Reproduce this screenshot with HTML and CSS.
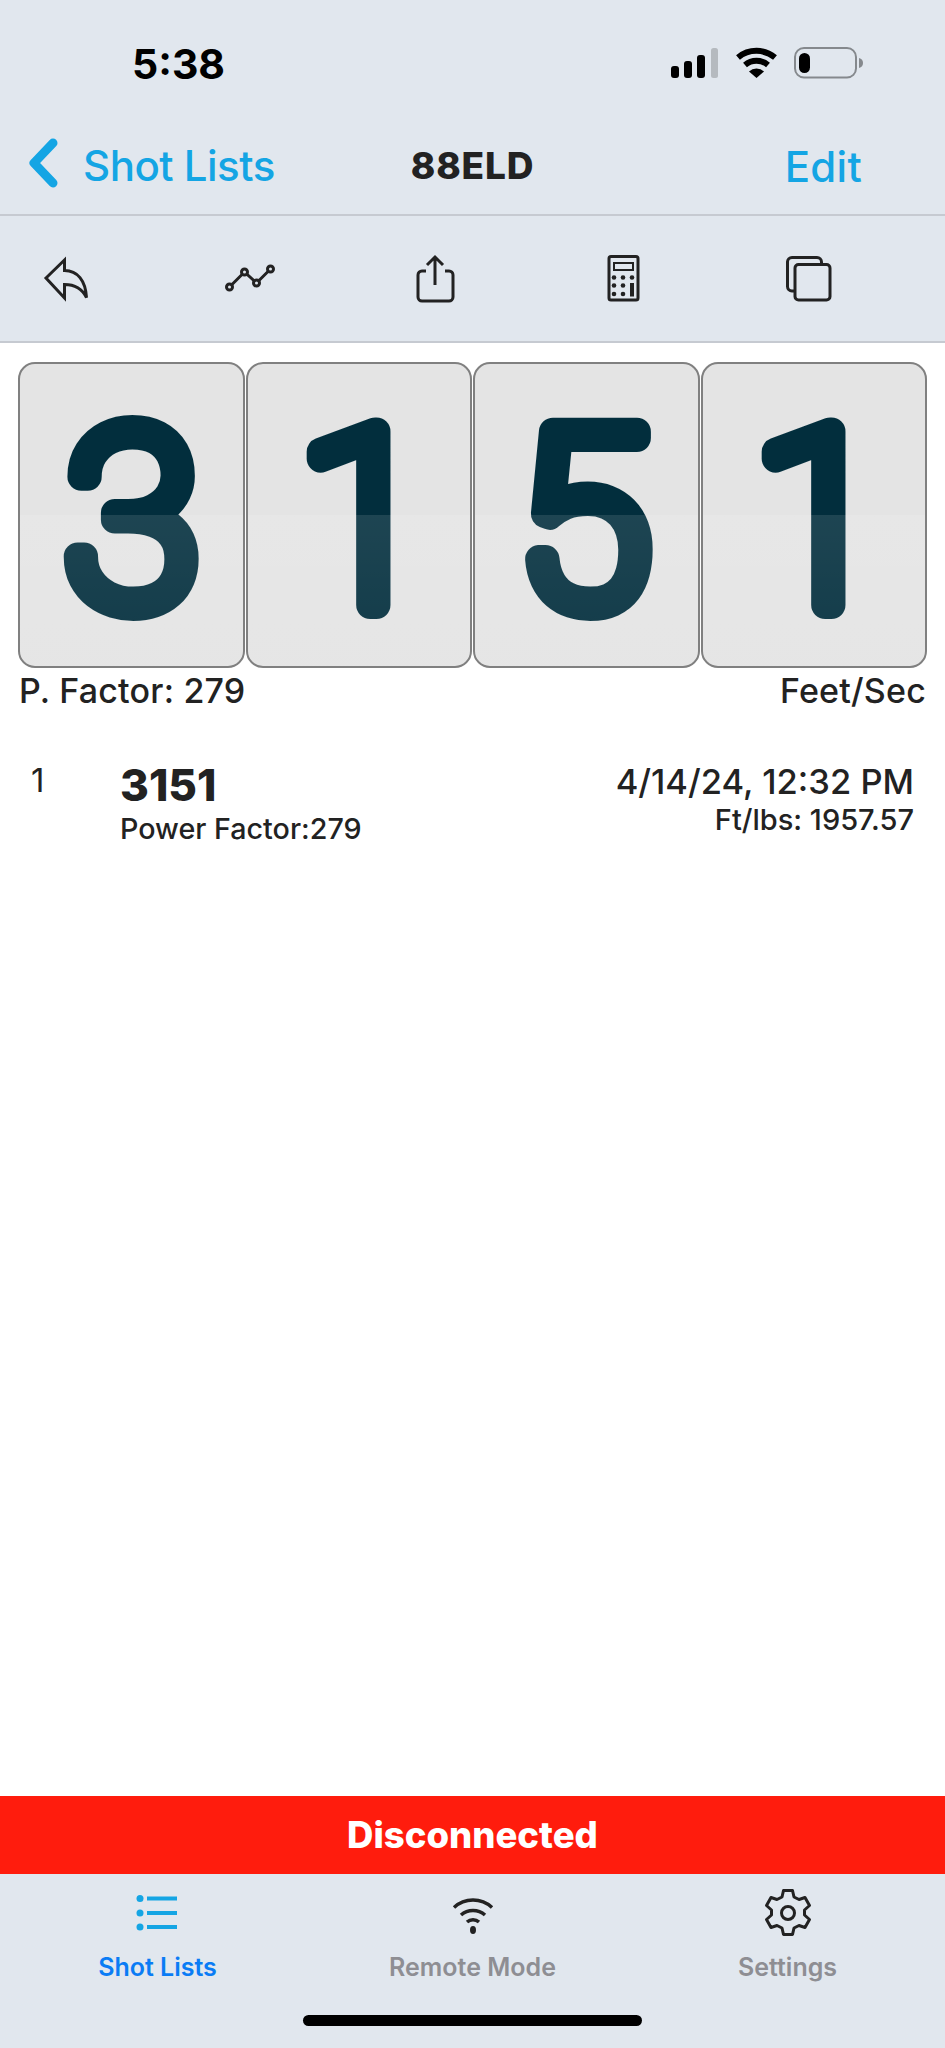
FILE: index.html
```html
<!DOCTYPE html>
<html lang="en">
<head>
<meta charset="utf-8">
<title>88ELD</title>
<link rel="stylesheet" href="styles.css">
</head>
<body>
<div class="app">
  <header class="top">
    <div class="status">
      <span class="time">5:38</span>
      <svg class="status-icons" width="192" height="32" viewBox="671 47 192 32">
        <rect x="671" y="66" width="8" height="12" rx="3" fill="#000"/>
        <rect x="684" y="61" width="8" height="17" rx="3" fill="#000"/>
        <rect x="697" y="55" width="8" height="23" rx="3" fill="#000"/>
        <rect x="711" y="48" width="7" height="30" rx="2.5" fill="#b5babf"/>
        <path d="M738 57.5a29 29 0 0 1 37 0" fill="none" stroke="#000" stroke-width="6"/>
        <path d="M745 65a18 18 0 0 1 23 0" fill="none" stroke="#000" stroke-width="6"/>
        <path d="M749 71.500a11 11 0 0 1 15 0L756.500 78z" fill="#000"/>
        <rect x="795" y="48" width="61" height="29.500" rx="9" fill="none" stroke="#85898d" stroke-width="2"/>
        <rect x="799" y="53" width="11" height="20" rx="5.500" fill="#000"/>
        <path d="M859 58v10q4-1 4-5t-4-5z" fill="#85898d"/>
      </svg>
    </div>
    <nav class="navbar">
      <a class="back">
        <svg width="32" height="50" viewBox="0 0 32 50"><path d="M26 5 7 25l19 20" fill="none" stroke="#14a5e4" stroke-width="9" stroke-linecap="round" stroke-linejoin="round"/></svg>
        <span>Shot Lists</span>
      </a>
      <h1 class="title">88ELD</h1>
      <a class="edit">Edit</a>
    </nav>
    <div class="toolbar">
      <svg class="tool" viewBox="36 250 60 56"><path d="M46 278 64.500 260v10.500c13 0 21 10 22 27-4-8-11-13-22-13V298z" fill="none" stroke="#222" stroke-width="3"/></svg>
      <svg class="tool" viewBox="221.500 250 60 56"><path d="M229 287 244 272 256 283 270 269" fill="none" stroke="#222" stroke-width="3"/><g fill="#e1e7ee" stroke="#222" stroke-width="3"><circle cx="229" cy="287" r="3"/><circle cx="244" cy="272" r="3"/><circle cx="256" cy="283" r="3"/><circle cx="270" cy="269" r="3"/></g></svg>
      <svg class="tool" viewBox="407 250 60 56"><path d="M426 271h-4a4 4 0 0 0-4 4v22a4 4 0 0 0 4 4h27a4 4 0 0 0 4-4v-22a4 4 0 0 0-4-4h-4M435 285V257M427 265l8-8 8 8" fill="none" stroke="#222" stroke-width="3"/></svg>
      <svg class="tool" viewBox="592.500 250 60 56"><rect x="608.500" y="256.500" width="29" height="43.500" rx="2" fill="none" stroke="#222" stroke-width="3"/><rect x="613.500" y="263" width="19" height="7" fill="none" stroke="#222" stroke-width="2"/><g fill="#222"><circle cx="613.500" cy="277.500" r="2.300"/><circle cx="622.500" cy="277.500" r="2.300"/><circle cx="631.500" cy="277.500" r="2.300"/><circle cx="613.500" cy="285.500" r="2.300"/><circle cx="622.500" cy="285.500" r="2.300"/><circle cx="613.500" cy="294" r="2.300"/><circle cx="622.500" cy="294" r="2.300"/><rect x="629.500" y="283" width="4" height="13.500"/></g></svg>
      <svg class="tool" viewBox="778 250 60 56"><path d="M794 291h-2a4.500 4.500 0 0 1-4.500-4.500V262a4.500 4.500 0 0 1 4.500-4.500h25a4.500 4.500 0 0 1 4.500 4.500v2" fill="none" stroke="#222" stroke-width="3"/><rect x="795" y="264.500" width="35" height="35.500" rx="3.500" fill="none" stroke="#222" stroke-width="3"/></svg>
    </div>
  </header>

  <main class="content">
    <div class="flip-row">
      <div class="flip"><svg class="flip-svg" viewBox="0 0 223 302"><text class="digit" x="112" y="241">3</text></svg></div>
      <div class="flip"><svg class="flip-svg" viewBox="0 0 223 302"><text class="digit" x="117" y="241">1</text></svg></div>
      <div class="flip"><svg class="flip-svg" viewBox="0 0 223 302"><text class="digit" x="109" y="241">5</text></svg></div>
      <div class="flip"><svg class="flip-svg" viewBox="0 0 223 302"><text class="digit" x="117" y="241">1</text></svg></div>
    </div>
    <div class="caption"><span>P. Factor: 279</span><span>Feet/Sec</span></div>
    <div class="shot">
      <span class="shot-num">1</span>
      <div class="shot-main">
        <div class="shot-speed">3151</div>
        <div class="shot-pf">Power Factor:279</div>
      </div>
      <div class="shot-meta">
        <div class="shot-date">4/14/24, 12:32 PM</div>
        <div class="shot-energy">Ft/lbs: 1957.57</div>
      </div>
    </div>
  </main>

  <div class="banner">Disconnected</div>

  <footer class="tabs">
    <div class="tab-grid">
      <div class="tab active">
        <svg class="tab-icon" viewBox="0 0 48 48"><g fill="#14a5e4"><circle cx="6" cy="9.500" r="3.500"/><circle cx="6" cy="24" r="3.500"/><circle cx="6" cy="38" r="3.500"/><rect x="13" y="7.500" width="30" height="4"/><rect x="13" y="22" width="30" height="4"/><rect x="13" y="36" width="30" height="4"/></g></svg>
        <span>Shot Lists</span>
      </div>
      <div class="tab">
        <svg class="tab-icon" viewBox="0 0 48 48"><g fill="none" stroke="#222" stroke-width="3.500"><path d="M5 18.500a28 28 0 0 1 38 0"/><path d="M12 26a18 18 0 0 1 24 0"/><path d="M18 33a9 9 0 0 1 12 0"/></g><ellipse cx="24" cy="41" rx="3" ry="4" fill="#222"/></svg>
        <span>Remote Mode</span>
      </div>
      <div class="tab">
        <svg class="tab-icon" viewBox="0 0 48 48"><path d="M19.500 1.500h9l1.500 6.500 5 2.500 6-2 4.500 8-5 4.500v5l5 4.500-4.500 8-6-2-5 2.500-1.500 6.500h-9l-1.500-6.500-5-2.500-6 2-4.500-8 5-4.500v-5l-5-4.500 4.500-8 6 2 5-2.500z" fill="none" stroke="#222" stroke-width="3" stroke-linejoin="round"/><circle cx="24" cy="24" r="6.500" fill="none" stroke="#222" stroke-width="3"/></svg>
        <span>Settings</span>
      </div>
    </div>
    <div class="home-bar"></div>
  </footer>
</div>
</body>
</html>
```

FILE: styles.css
```css
* { box-sizing: border-box; margin: 0; padding: 0; }
html, body { height: 100%; }
body {
  background: #fff;
  font-family: Inter, "Liberation Sans", sans-serif;
  color: #222;
}
.app { height: 2048px; display: flex; flex-direction: column; }

.top { background: #e1e7ee; border-bottom: 2px solid #c6cad1; }
.status {
  height: 110px;
  display: flex;
  justify-content: space-between;
  padding: 47px 82px 0 132px;
}
.time { font-size: 41px; font-weight: 700; line-height: 34px; color: #000; }
.status-icons { display: block; }

.navbar {
  height: 106px;
  border-bottom: 2px solid #c6cad1;
  display: grid;
  grid-template-columns: 1fr auto 1fr;
  align-items: center;
  padding: 6px 27px 0;
}
.back { display: flex; align-items: center; gap: 24px; color: #14a5e4; font-size: 42px; font-weight: 500; letter-spacing: -0.5px; }
.back svg { display: block; margin-top: -4px; }
.title { font-size: 37px; font-weight: 800; letter-spacing: 0.8px; line-height: 1; }
.edit { justify-self: end; margin: 2px 56px 0 0; color: #14a5e4; font-size: 42px; font-weight: 500; letter-spacing: 0.3px; }

.toolbar {
  height: 125px;
  display: flex;
  justify-content: space-between;
  align-items: flex-start;
  padding: 34px 107px 0 36px;
}
.tool { width: 60px; height: 56px; display: block; }

.content { flex: 1; padding-top: 19px; }
.flip-row { display: flex; gap: 1px; padding: 0 18px; }
.flip {
  flex: 1;
  height: 306px;
  background: #e4e4e4;
  border: 2px solid #808080;
  border-radius: 17px;
  position: relative;
}
.flip::after {
  content: "";
  position: absolute;
  left: 0;
  right: 0;
  top: 50%;
  bottom: 0;
  border-radius: 0 0 15px 15px;
  background: linear-gradient(rgba(255,255,255,.11), rgba(255,255,255,.06));
}
.flip-svg { display: block; width: 100%; height: 100%; overflow: visible; }
.digit {
  font-family: Roboto, "Liberation Sans", sans-serif;
  font-size: 243px;
  font-weight: 100;
  text-anchor: middle;
  fill: #022e3d;
  stroke: #022e3d;
  stroke-width: 28px;
  stroke-linejoin: round;
  stroke-linecap: round;
}

.caption {
  display: flex;
  justify-content: space-between;
  padding: 3px 19px 0;
  font-size: 34px;
  font-weight: 500;
  letter-spacing: 0.2px;
  line-height: 40px;
}

.shot { display: flex; padding: 49px 31px 0; }
.shot-num { width: 89px; font-size: 33px; font-weight: 400; line-height: 40px; }
.shot-main { flex: 1; }
.shot-speed { font-size: 44px; font-weight: 800; line-height: 48px; margin-top: 1px; }
.shot-pf { font-size: 28.7px; font-weight: 500; line-height: 36px; margin-top: 2px; }
.shot-meta { text-align: right; padding-top: 2px; }
.shot-date { font-size: 34.5px; font-weight: 500; line-height: 40px; }
.shot-energy { font-size: 29px; font-weight: 500; line-height: 36px; }

.banner {
  height: 78px;
  background: #ff1c0d;
  color: #fff;
  font-size: 36.5px;
  font-weight: 800;
  display: flex;
  align-items: center;
  justify-content: center;
}

.tabs { height: 174px; background: #e1e7ee; display: flex; flex-direction: column; }
.tab-grid { display: grid; grid-template-columns: repeat(3, 1fr); padding-top: 15px; }
.tab {
  display: flex;
  flex-direction: column;
  align-items: center;
  gap: 15px;
  font-size: 25px;
  font-weight: 600;
  line-height: 30px;
  color: #8e8e93;
}
.tab.active { color: #0a7cf5; }
.tab-icon { width: 48px; height: 48px; display: block; }
.home-bar {
  width: 339px;
  height: 11px;
  background: #000;
  border-radius: 6px;
  margin: 33px auto 0;
}
```
